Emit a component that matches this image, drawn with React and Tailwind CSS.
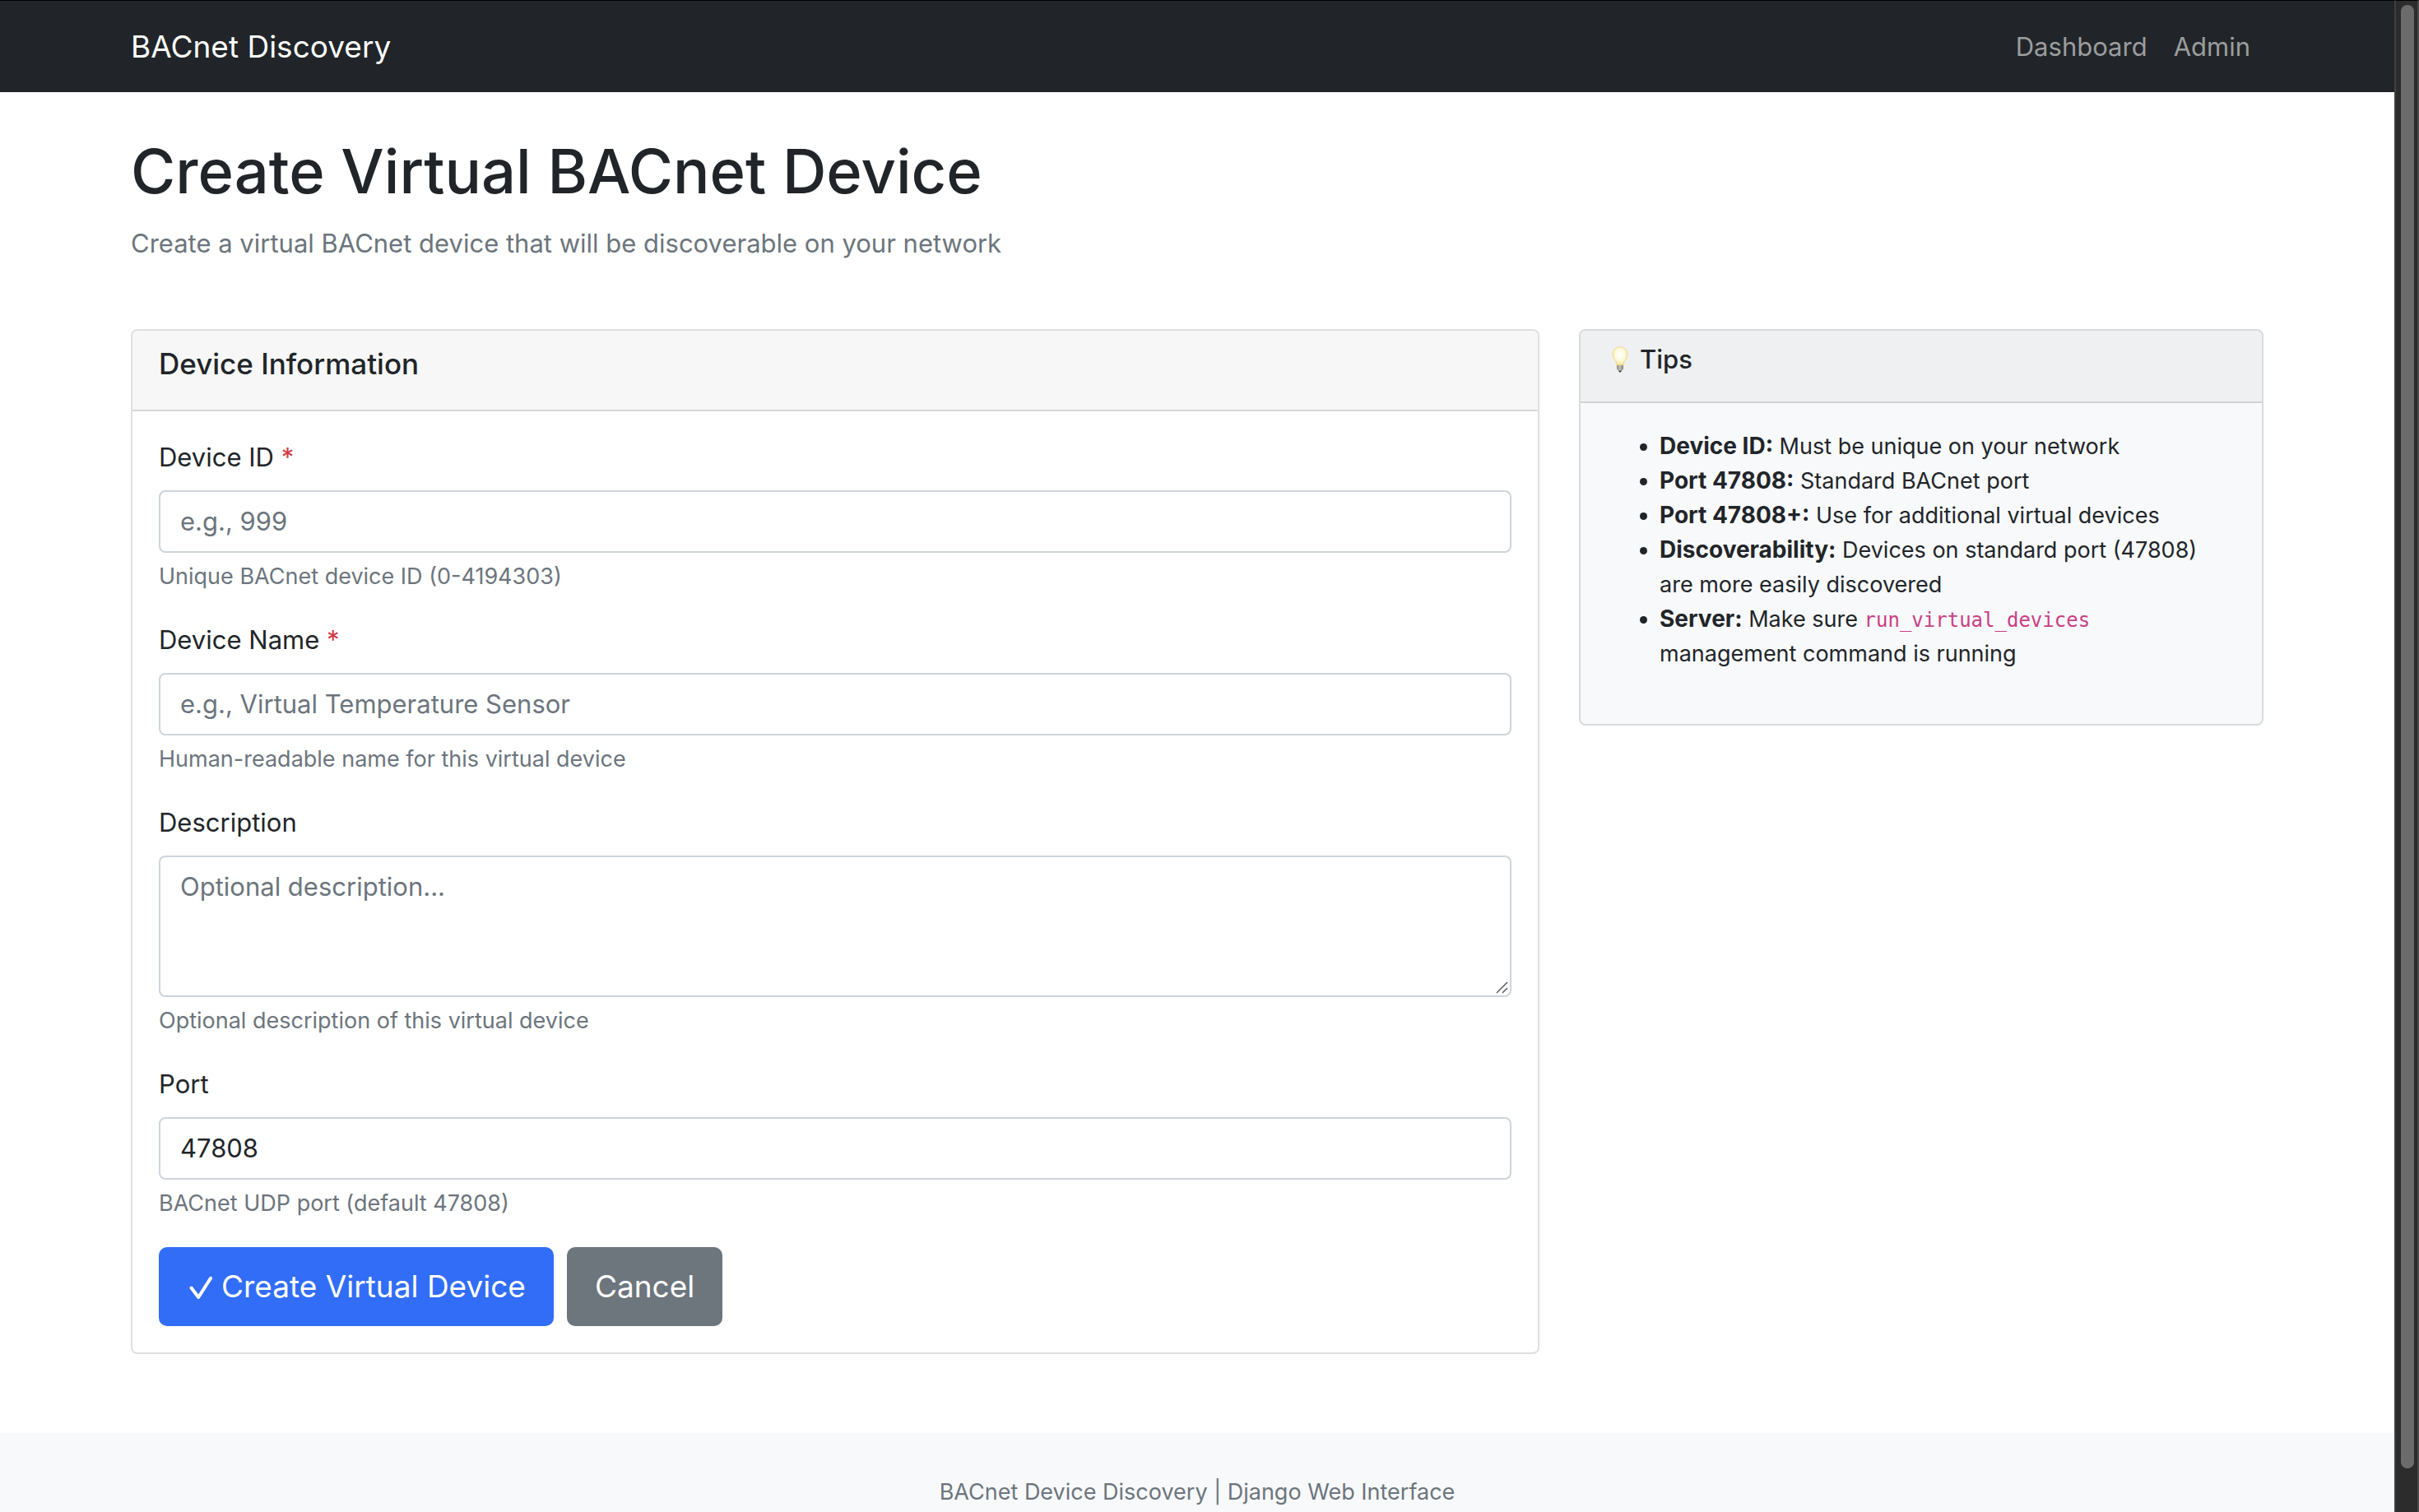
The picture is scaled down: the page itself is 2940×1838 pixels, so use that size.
function Bulb() {
  return (
    <svg viewBox="0 0 20 32" className="mx-[6px] h-8 w-5 shrink-0" aria-hidden="true">
      <defs>
        <radialGradient id="glass" cx="50%" cy="42%" r="58%">
          <stop offset="0" stopColor="#fffffa" />
          <stop offset="0.5" stopColor="#fefbe4" />
          <stop offset="0.85" stopColor="#f8ebae" />
          <stop offset="1" stopColor="#ecd37a" />
        </radialGradient>
        <linearGradient id="base" x1="0" x2="1">
          <stop offset="0" stopColor="#8c8a84" />
          <stop offset="0.45" stopColor="#d2cfc8" />
          <stop offset="1" stopColor="#85827b" />
        </linearGradient>
      </defs>
      <path d="M10 .8C4.900 .8 1 4.600 1 9.600c0 3.400 1.800 5.600 3.300 8 1 1.700 1.400 3.200 1.700 5.400h8c.3-2.200.7-3.700 1.700-5.400 1.500-2.400 3.300-4.600 3.300-8C19 4.600 15.100.8 10 .8z" fill="url(#glass)" stroke="#ecd583" strokeWidth=".8" />
      <path d="M6 23h8v3.600c0 1.600-1.200 2.600-2 3H8c-.8-.4-2-1.400-2-3z" fill="url(#base)" />
      <path d="M6.200 25h7.600M6.400 27.300h7.200" stroke="#8d8a83" strokeWidth=".6" />
      <path d="M7.800 29.400h4.400L10.800 31.400H9.200z" fill="#3b3935" />
    </svg>
  );
}

function Check() {
  return (
    <svg viewBox="0 0 32 40" className="h-10 w-8 shrink-0" fill="none" stroke="#fff" strokeWidth="4" strokeLinecap="round" strokeLinejoin="round" aria-hidden="true">
      <path d="M5.500 21.500 14.200 33 29 9.800" />
    </svg>
  );
}

const control =
  'block w-full rounded-[8px] border-2 border-[#ced4da] bg-white px-6 py-3 text-[31px] leading-[48px] text-[#212529] placeholder:text-[#6c757d] placeholder:opacity-100';

function Field({ id, label, required, help, className = 'mb-8', children }) {
  return (
    <div className={className}>
      <label htmlFor={id} className="mb-4 block text-[31px] leading-[48px]">
        {label}
        {required && <span className="text-[#cf3a47]"> *</span>}
      </label>
      {children}
      <p id={`${id}-help`} className="mt-2 text-[27px] leading-[42px] text-[#6c757d]">
        {help}
      </p>
    </div>
  );
}

function Tip({ title, children }) {
  return (
    <li>
      <strong className="text-[28px] leading-[28px] font-bold">{title}</strong> {children}
    </li>
  );
}

export default function App() {
  return (
    <div className="flex h-screen overflow-hidden bg-white font-['Inter','Liberation_Sans',sans-serif] text-[#212529]">
      <div className="flex min-w-0 flex-1 flex-col">
        <nav className="shrink-0 border-t border-black bg-[#212529]">
          <div className="mx-auto flex h-[111px] w-full max-w-[2640px] items-center justify-between px-6">
            <a href="#home" className="text-[37px] leading-[60px] text-white">BACnet Discovery</a>
            <div className="flex text-[31px] leading-[48px] text-[#9b9d9e]">
              <a href="#dashboard" className="px-4">Dashboard</a>
              <a href="#admin" className="px-4">Admin</a>
            </div>
          </div>
        </nav>

        <main className="mx-auto mb-12 w-full max-w-[2640px] shrink-0 px-6 pt-12">
          <header className="mb-20">
            <h1 className="mb-4 text-[74px] leading-[96px] font-medium">Create Virtual BACnet Device</h1>
            <p className="text-[31px] leading-[48px] text-[#6c757d]">
              Create a virtual BACnet device that will be discoverable on your network
            </p>
          </header>

          <div className="grid grid-cols-3 items-start gap-12">
            <section className="col-span-2 rounded-[8px] border-2 border-[#dfdfdf]">
              <div className="rounded-t-[6px] border-b-2 border-[#d9d9d9] bg-[#f7f7f7] px-8 pt-4 pb-8">
                <h2 className="text-[35px] leading-[48px] font-medium">Device Information</h2>
              </div>
              <form className="p-8" onSubmit={(e) => e.preventDefault()}>
                <Field id="device-id" label="Device ID" required help="Unique BACnet device ID (0-4194303)">
                  <input id="device-id" aria-describedby="device-id-help" className={control} placeholder="e.g., 999" inputMode="numeric" />
                </Field>
                <Field id="device-name" label="Device Name" required help="Human-readable name for this virtual device">
                  <input id="device-name" aria-describedby="device-name-help" className={control} placeholder="e.g., Virtual Temperature Sensor" />
                </Field>
                <Field id="description" label="Description" help="Optional description of this virtual device">
                  <div className="relative">
                    <textarea id="description" rows={3} aria-describedby="description-help" className={`${control} resize-none`} placeholder="Optional description..." />
                    <svg viewBox="0 0 16 16" className="pointer-events-none absolute right-1 bottom-1 size-4" stroke="#5c5c5c" strokeWidth="1.500" aria-hidden="true">
                      <path d="M2 15 15 2M9 15 15 9" />
                    </svg>
                  </div>
                </Field>
                <Field id="port" label="Port" help="BACnet UDP port (default 47808)">
                  <input id="port" aria-describedby="port-help" className={control} defaultValue="47808" inputMode="numeric" />
                </Field>
                <div className="flex gap-4">
                  <button type="submit" className="flex items-center gap-[10px] rounded-[10px] bg-[#316df6] px-[34px] py-[18px] text-[37px] leading-[60px] text-white">
                    <Check />
                    Create Virtual Device
                  </button>
                  <button type="button" className="rounded-[10px] bg-[#6d757d] px-[34px] py-[18px] text-[37px] leading-[60px] text-white">
                    Cancel
                  </button>
                </div>
              </form>
            </section>

            <aside className="rounded-[8px] border-2 border-[#d9dadb] bg-[#f8f9fb]">
              <div className="rounded-t-[6px] border-b-2 border-[#d0d1d3] bg-[#eff0f2] px-8 pt-4 pb-8">
                <h2 className="flex items-center gap-2 text-[31px] leading-[38px] font-medium">
                  <Bulb />
                  Tips
                </h2>
              </div>
              <div className="px-8 pt-8 pb-16">
                <ul className="list-disc pr-6 pl-16 text-[27px] leading-[42px]">
                  <Tip title="Device ID:">Must be unique on your network</Tip>
                  <Tip title="Port 47808:">Standard BACnet port</Tip>
                  <Tip title="Port 47808+:">Use for additional virtual devices</Tip>
                  <Tip title="Discoverability:">Devices on standard port (47808) are more easily discovered</Tip>
                  <Tip title="Server:">
                    Make sure{' '}
                    <code className="font-['DejaVu_Sans_Mono','Liberation_Mono',monospace] text-[24px] leading-[28px] text-[#cb3e84]">run_virtual_devices</code>{' '}
                    management command is running
                  </Tip>
                </ul>
              </div>
            </aside>
          </div>
        </main>

        <footer className="mt-12 flex-1 bg-[#f8f9fb] pt-12 text-center text-[27px] leading-[48px] text-[#6c757d]">
          <p>BACnet Device Discovery | Django Web Interface</p>
        </footer>
      </div>

      <div className="flex w-[30px] shrink-0 justify-center border-t border-r-2 border-l-2 border-t-black border-r-[#4a4a4a] border-l-[#3f3f3f] bg-[#2c2c2c] pt-[5px] pr-[2px] pb-[53px] pl-1" aria-hidden="true">
        <div className="w-4 rounded-full bg-[#6b6b6b]" />
      </div>
    </div>
  );
}
